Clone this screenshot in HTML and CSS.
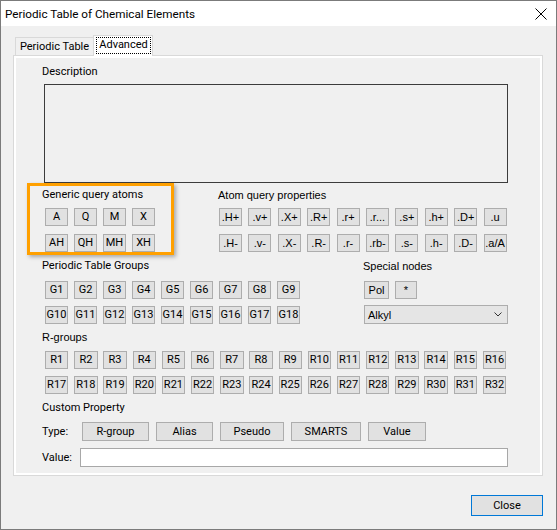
FILE: index.html
```html
<!DOCTYPE html>
<html>
<head>
<meta charset="utf-8">
<title>Periodic Table of Chemical Elements</title>
<link rel="stylesheet" href="styles.css">
</head>
<body>
<div class="window">
  <div class="titlebar">
    <span class="title">Periodic Table of Chemical Elements</span>
    <svg class="close-x" width="12" height="12" viewBox="0 0 12 12"><path d="M0.5 0.5 L11.5 11.5 M11.5 0.5 L0.5 11.5" stroke="#000" stroke-width="1" fill="none"/></svg>
  </div>
  <div class="content">
    <div class="tabs">
      <div class="tab">Periodic Table</div>
      <div class="tab active"><span class="focus">Advanced</span></div>
    </div>
    <div class="panel">
      <div class="page">
        <div class="label seg">Description</div>
        <div class="desc"></div>

        <div class="row top-row">
          <div class="col-generic">
            <div class="label seg">Generic query atoms</div>
            <div class="grid g4">
              <div class="btn seg">A</div><div class="btn seg">Q</div><div class="btn seg">M</div><div class="btn seg">X</div>
              <div class="btn seg">AH</div><div class="btn seg">QH</div><div class="btn seg">MH</div><div class="btn seg">XH</div>
            </div>
          </div>
          <div class="col-aqp">
            <div class="label">Atom query properties</div>
            <div class="grid g10">
              <div class="btn">.H+</div><div class="btn">.v+</div><div class="btn">.X+</div><div class="btn">.R+</div><div class="btn">.r+</div><div class="btn">.r...</div><div class="btn">.s+</div><div class="btn">.h+</div><div class="btn">.D+</div><div class="btn">.u</div>
              <div class="btn">.H-</div><div class="btn">.v-</div><div class="btn">.X-</div><div class="btn">.R-</div><div class="btn">.r-</div><div class="btn">.rb-</div><div class="btn">.s-</div><div class="btn">.h-</div><div class="btn">.D-</div><div class="btn">.a/A</div>
            </div>
          </div>
        </div>

        <div class="row mid-row">
          <div class="col-groups">
            <div class="label seg">Periodic Table Groups</div>
            <div class="grid g9">
              <div class="btn seg">G1</div><div class="btn seg">G2</div><div class="btn seg">G3</div><div class="btn seg">G4</div><div class="btn seg">G5</div><div class="btn seg">G6</div><div class="btn seg">G7</div><div class="btn seg">G8</div><div class="btn seg">G9</div>
              <div class="btn seg">G10</div><div class="btn seg">G11</div><div class="btn seg">G12</div><div class="btn seg">G13</div><div class="btn seg">G14</div><div class="btn seg">G15</div><div class="btn seg">G16</div><div class="btn seg">G17</div><div class="btn seg">G18</div>
            </div>
          </div>
          <div class="col-special">
            <div class="label">Special nodes</div>
            <div class="special-btns">
              <div class="btn pol">Pol</div><div class="btn star">*</div>
            </div>
            <div class="combo">
              <span>Alkyl</span>
              <svg width="8" height="5" viewBox="0 0 8 5"><path d="M0.5 0.5 L4 4 L7.5 0.5" stroke="#333" stroke-width="1" fill="none"/></svg>
            </div>
          </div>
        </div>

        <div class="rgroups">
          <div class="label">R-groups</div>
          <div class="grid g16">
            <div class="btn seg">R1</div><div class="btn seg">R2</div><div class="btn seg">R3</div><div class="btn seg">R4</div><div class="btn seg">R5</div><div class="btn seg">R6</div><div class="btn seg">R7</div><div class="btn seg">R8</div><div class="btn seg">R9</div><div class="btn seg">R10</div><div class="btn seg">R11</div><div class="btn seg">R12</div><div class="btn seg">R13</div><div class="btn seg">R14</div><div class="btn seg">R15</div><div class="btn seg">R16</div>
            <div class="btn seg">R17</div><div class="btn seg">R18</div><div class="btn seg">R19</div><div class="btn seg">R20</div><div class="btn seg">R21</div><div class="btn seg">R22</div><div class="btn seg">R23</div><div class="btn seg">R24</div><div class="btn seg">R25</div><div class="btn seg">R26</div><div class="btn seg">R27</div><div class="btn seg">R28</div><div class="btn seg">R29</div><div class="btn seg">R30</div><div class="btn seg">R31</div><div class="btn seg">R32</div>
          </div>
        </div>

        <div class="custom">
          <div class="label seg">Custom Property</div>
          <div class="type-row">
            <span class="row-label seg type-label">Type:</span>
            <div class="btn wide seg w-rgroup">R-group</div>
            <div class="btn wide seg w-alias">Alias</div>
            <div class="btn wide seg w-pseudo">Pseudo</div>
            <div class="btn wide seg w-smarts">SMARTS</div>
            <div class="btn wide seg w-value">Value</div>
          </div>
          <div class="value-row">
            <span class="row-label seg value-label">Value:</span>
            <div class="input"></div>
          </div>
        </div>
      </div>
    </div>
    <div class="footer">
      <div class="btn close-btn seg">Close</div>
    </div>
  </div>
  <div class="highlight"></div>
</div>
</body>
</html>
```

FILE: styles.css
```css
* {
  box-sizing: border-box;
  margin: 0;
  padding: 0;
}

body {
  margin: 0;
  background: #ffffff;
  font-family: "Liberation Sans", Arial, sans-serif;
  font-size: 11px;
  color: #000;
}

.seg {
  font-family: Roboto, "Liberation Sans", sans-serif;
}

.window {
  position: relative;
  width: 557px;
  height: 530px;
  border: 1px solid #7b7b7b;
  background: #f0f0f0;
  display: flex;
  flex-direction: column;
}

.titlebar {
  flex: none;
  height: 25px;
  background: #ffffff;
  display: flex;
  align-items: center;
  justify-content: space-between;
  padding: 0 9px 0 4px;
}

.title {
  font-family: Roboto, sans-serif;
  font-size: 11.7px;
}

.content {
  flex: 1;
  display: flex;
  flex-direction: column;
  padding: 9px 13px 0 12px;
}

.tabs {
  display: flex;
  align-items: flex-end;
  height: 20px;
  padding-left: 2px;
}

.tab {
  width: 79px;
  height: 18px;
  border: 1px solid #d9d9d9;
  border-bottom: none;
  background: #f0f0f0;
  font-family: Roboto, sans-serif;
  font-size: 11px;
  line-height: 17px;
  text-align: center;
}

.tab.active {
  position: relative;
  z-index: 1;
  width: 60px;
  height: 21px;
  margin-left: -1px;
  margin-bottom: -1px;
  background: #ffffff;
  padding: 1px 1px 0 2px;
}

.focus {
  display: block;
  height: 17px;
  border: 1px dotted #000;
  line-height: 14px;
}

.panel {
  height: 421px;
  border: 1px solid #d9d9d9;
  background: #ffffff;
  padding: 2px;
}

.page {
  height: 100%;
  background: #f0f0f0;
  padding: 6px 0 0 26px;
}

.label {
  height: 16px;
  line-height: 16px;
  white-space: nowrap;
}

.desc {
  width: 464px;
  height: 99px;
  margin: 4px 0 0 2px;
  border: 1px solid #3c3c3c;
}

.row {
  display: flex;
}

.top-row {
  margin-top: 4px;
}

.col-generic {
  width: 176px;
}

.grid {
  display: grid;
  grid-auto-rows: 18px;
}

.g4 {
  margin: 5px 0 0 3px;
  grid-template-columns: repeat(4, 23px);
  column-gap: 6px;
  row-gap: 8px;
}

.g10 {
  margin: 5px 0 0 1px;
  grid-template-columns: repeat(10, 23px);
  column-gap: 6.4px;
  row-gap: 8px;
}

.mid-row {
  margin-top: 6px;
}

.col-groups {
  width: 321px;
}

.g9 {
  margin: 7px 0 0 3px;
  grid-template-columns: repeat(9, 23px);
  column-gap: 6px;
  row-gap: 7px;
}

.special-btns {
  display: flex;
  gap: 6px;
  margin: 7px 0 0 1px;
}

.pol {
  width: 25px;
  height: 18px;
}

.star {
  width: 22px;
  height: 18px;
}

.combo {
  display: flex;
  align-items: center;
  justify-content: space-between;
  width: 144px;
  height: 19px;
  margin: 6px 0 0 1px;
  padding: 0 5px 0 3px;
  border: 1px solid #adadad;
  background: #e5e5e5;
}

.rgroups {
  margin-top: 5px;
}

.g16 {
  margin: 6px 0 0 3px;
  grid-template-columns: repeat(16, 23.4px);
  column-gap: 5.8px;
  row-gap: 7px;
}

.btn {
  border: 1px solid #adadad;
  background: #e1e1e1;
  font-size: 11px;
  text-align: center;
  line-height: 16px;
  white-space: nowrap;
  overflow: hidden;
}

.custom {
  margin-top: 6px;
}

.type-row {
  display: flex;
  align-items: center;
  margin-top: 6px;
  height: 19px;
}

.row-label {
  display: block;
}

.type-label {
  width: 40px;
}

.wide {
  height: 19px;
  line-height: 17px;
  margin-right: 7px;
}

.w-rgroup { width: 67px; }
.w-alias { width: 57px; }
.w-pseudo { width: 64px; }
.w-smarts { width: 70px; }
.w-value { width: 58px; }

.value-row {
  display: flex;
  align-items: center;
  margin-top: 7px;
  height: 19px;
}

.value-label {
  width: 38px;
}

.input {
  width: 428px;
  height: 19px;
  border: 1px solid #a8a8a8;
  background: #ffffff;
}

.footer {
  display: flex;
  justify-content: flex-end;
  margin-top: 19px;
}

.close-btn {
  width: 72px;
  height: 21px;
  line-height: 19px;
  border: 1px solid #0078d7;
  background: #e1e1e1;
}

.highlight {
  position: absolute;
  left: 26px;
  top: 182px;
  width: 147px;
  height: 72px;
  border: 3px solid #ffa000;
  box-shadow: 2px 2px 4px rgba(0, 0, 0, 0.3);
}
```
